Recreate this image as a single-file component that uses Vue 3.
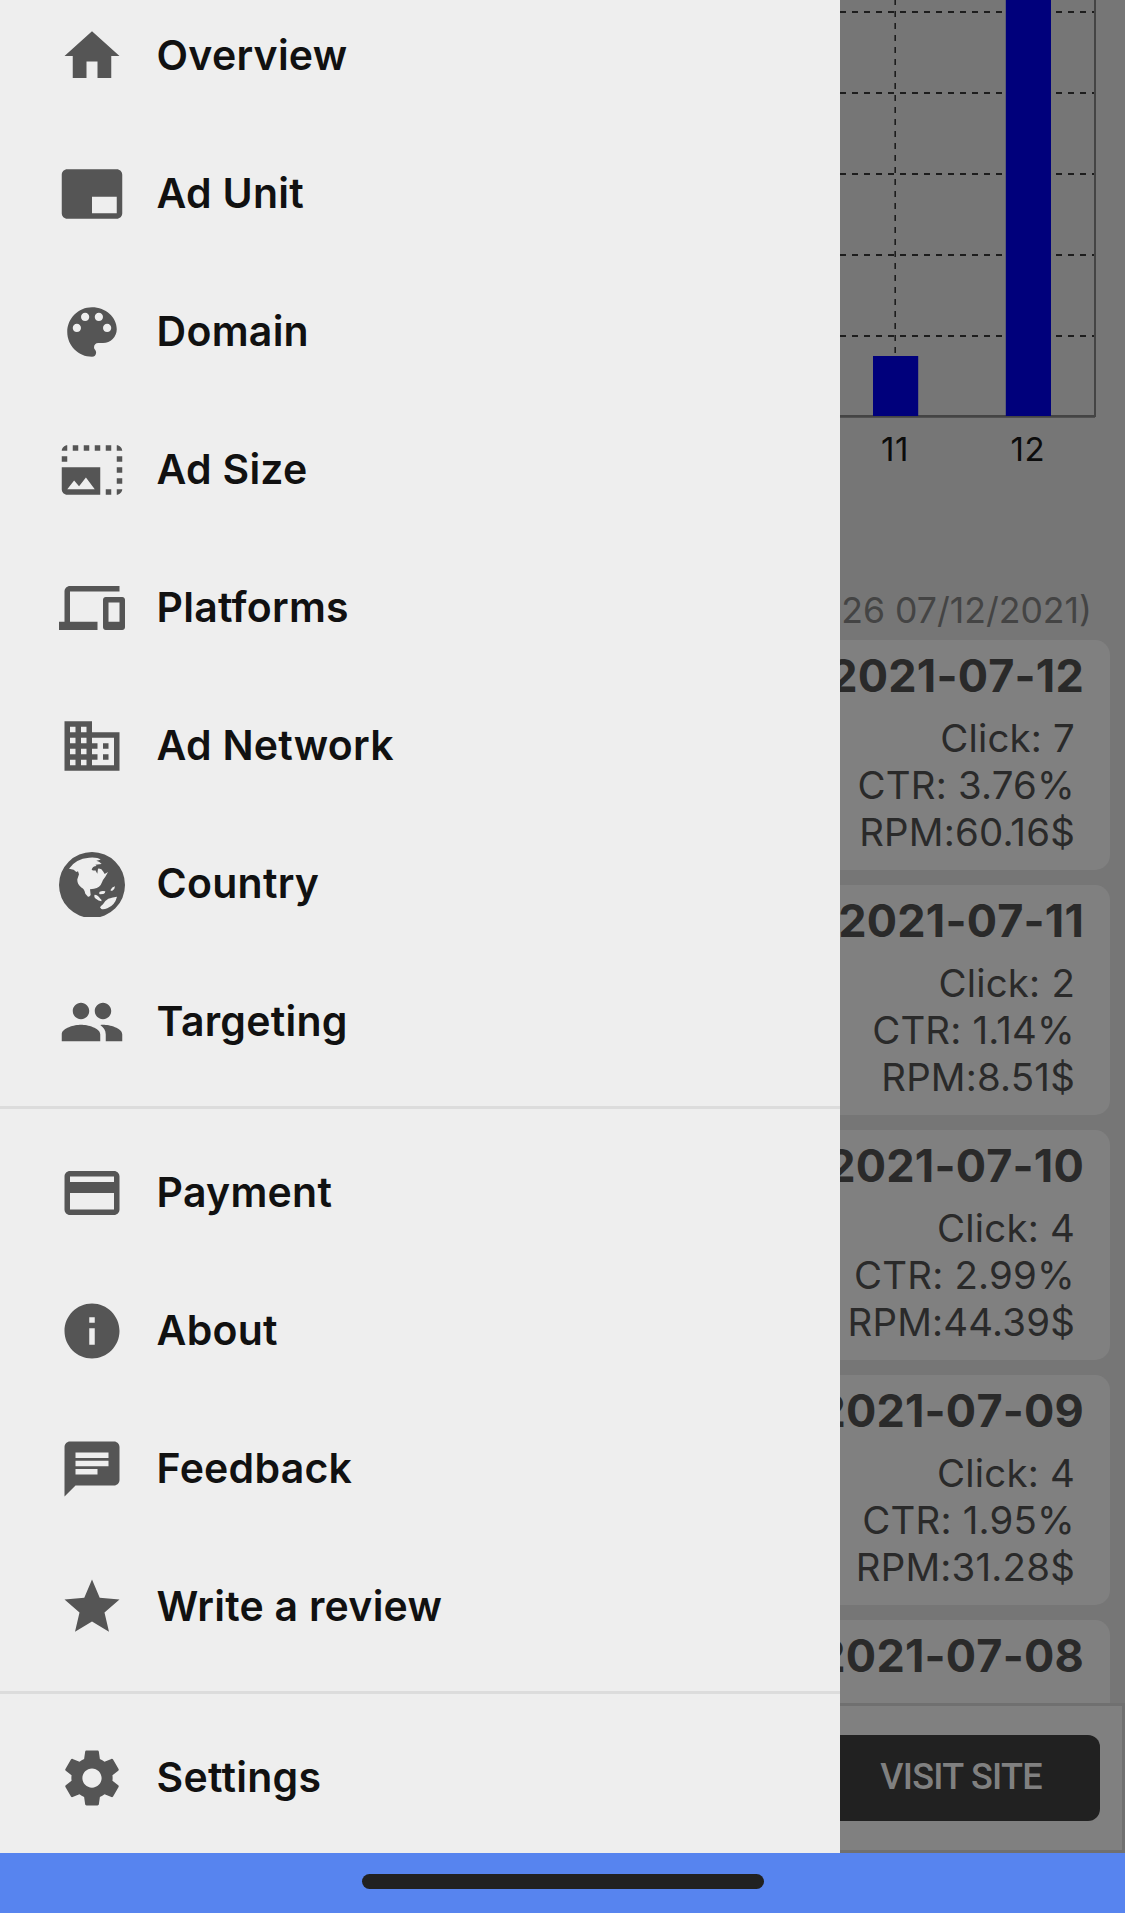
<template>
    <div class="screen">
        <main class="page">
            <svg class="chart" width="285" height="480" viewBox="840 0 285 480">
                <line
                    v-for="y in gridLines"
                    :key="y"
                    class="grid"
                    x1="840"
                    x2="1095"
                    :y1="y"
                    :y2="y"
                />
                <line class="grid thin" x1="895.2" x2="895.2" y1="-1" y2="354" />
                <line class="axis thin" x1="1095" x2="1095" y1="0" y2="417" />
                <line class="axis" x1="840" x2="1095" y1="416.3" y2="416.3" />
                <g v-for="bar in bars" :key="bar.label">
                    <rect
                        class="bar"
                        :x="bar.x"
                        :y="bar.top"
                        width="45.2"
                        :height="416 - bar.top"
                    />
                    <text class="tick" :x="bar.x + 22" y="461.3">
                        {{ bar.label }}
                    </text>
                </g>
            </svg>

            <p class="updated">26 07/12/2021)</p>

            <div class="cards">
                <section v-for="day in days" :key="day.date" class="card">
                    <h2>{{ day.date }}</h2>
                    <template v-if="day.ctr">
                        <p>Click: {{ day.click }}</p>
                        <p>CTR: {{ day.ctr }}%</p>
                        <p>RPM:{{ day.rpm }}$</p>
                    </template>
                </section>
            </div>

            <div class="ad-bar">
                <button class="visit">VISIT SITE</button>
            </div>
        </main>

        <nav class="drawer">
            <ul v-for="(group, i) in menu" :key="i" class="group">
                <li v-for="item in group" :key="item.title" class="item">
                    <svg class="icon" :viewBox="item.box || '0 0 24 24'">
                        <path :d="item.icon" fill-rule="evenodd" />
                    </svg>
                    <span>{{ item.title }}</span>
                </li>
            </ul>
        </nav>

        <footer class="home-area">
            <div class="indicator"></div>
        </footer>
    </div>
</template>

<script setup>
const gridLines = [12, 93, 174, 255, 336];

const bars = [
    { label: "11", x: 873, top: 356 },
    { label: "12", x: 1005.8, top: -10 },
];

const days = [
    { date: "2021-07-12", click: 7, ctr: "3.76", rpm: "60.16" },
    { date: "2021-07-11", click: 2, ctr: "1.14", rpm: "8.51" },
    { date: "2021-07-10", click: 4, ctr: "2.99", rpm: "44.39" },
    { date: "2021-07-09", click: 4, ctr: "1.95", rpm: "31.28" },
    { date: "2021-07-08" },
];

const menu = [
    [
        {
            title: "Overview",
            icon: "M10 20v-6h4v6h5v-8h3L12 3 2 12h3v8z",
        },
        {
            title: "Ad Unit",
            icon: "M21 3H3c-1.1 0-2 .9-2 2v14c0 1.1.9 2 2 2h18c1.1 0 2-.9 2-2V5c0-1.1-.9-2-2-2zm0 16h-9v-6h9v6z",
        },
        {
            title: "Domain",
            icon: "M12 3c-4.97 0-9 4.03-9 9s4.03 9 9 9c.83 0 1.5-.67 1.5-1.5 0-.39-.15-.74-.39-1.01-.23-.26-.38-.61-.38-.99 0-.83.67-1.5 1.5-1.5H16c2.76 0 5-2.24 5-5 0-4.42-4.03-8-9-8zm-5.5 9c-.83 0-1.5-.67-1.5-1.5S5.67 9 6.5 9 8 9.67 8 10.5 7.33 12 6.5 12zm3-4C8.67 8 8 7.33 8 6.5S8.67 5 9.5 5s1.5.67 1.5 1.5S10.33 8 9.5 8zm5 0c-.83 0-1.5-.67-1.5-1.5S13.67 5 14.5 5s1.5.67 1.5 1.5S15.33 8 14.5 8zm3 4c-.83 0-1.5-.67-1.5-1.5S16.67 9 17.5 9s1.5.67 1.5 1.5-.67 1.5-1.5 1.5z",
        },
        {
            title: "Ad Size",
            icon: "M21 15h2v2h-2v-2zm0-4h2v2h-2v-2zm2 8h-2v2c1 0 2-1 2-2zM13 3h2v2h-2V3zm8 4h2v2h-2V7zm0-4v2h2c0-1-1-2-2-2zM1 7h2v2H1V7zm16-4h2v2h-2V3zm0 16h2v2h-2v-2zM3 3C2 3 1 4 1 5h2V3zm6 0h2v2H9V3zM5 3h2v2H5V3zm-4 8v8c0 1.1.9 2 2 2h12V11H1zm2 8l2.5-3.21 1.79 2.15 2.5-3.22L13 19H3z",
        },
        {
            title: "Platforms",
            icon: "M4 6h18V4H4c-1.1 0-2 .9-2 2v11H0v3h14v-3H4V6zm19 2h-6c-.55 0-1 .45-1 1v10c0 .55.45 1 1 1h6c.55 0 1-.45 1-1V9c0-.55-.45-1-1-1zm-1 9h-4v-7h4v7z",
        },
        {
            title: "Ad Network",
            icon: "M12 7V3H2v18h20V7H12zM6 19H4v-2h2v2zm0-4H4v-2h2v2zm0-4H4V9h2v2zm0-4H4V5h2v2zm4 12H8v-2h2v2zm0-4H8v-2h2v2zm0-4H8V9h2v2zm0-4H8V5h2v2zm10 12h-8v-2h2v-2h-2v-2h2v-2h-2V9h8v10zm-2-8h-2v2h2v-2zm0 4h-2v2h2v-2z",
        },
        {
            title: "Country",
            box: "0 -3 198 198",
            icon: "M99 0a99 99 0 1 0 0 198a99 99 0 1 0 0-198zM30 50Q50 20 90 17Q116 15 125 23L112 26Q119 28 122 31L128 36L109 38L113 42Q100 43 98 53Q104 57 109 55L115 65L117 50Q127 48 133 59L137 66L147 60L139 74Q132 82 129 91Q123 108 105 110L93 112L95 129Q92 135 87 134L79 125Q76 110 68 107Q54 98 55 82L60 67L57 58L52 60L44 53zM107 128Q116 128 124 140Q129 143 127 148Q117 147 113 142Q103 137 107 128zM122 119Q130 116 139 118Q139 125 133 126L123 127Q119 125 122 119zM154 115Q159 105 168 103Q168 112 159 117zM123 166Q126 161 132 157L139 147L148 140Q162 136 174 134Q168 159 145 169Q134 173 127 171z",
        },
        {
            title: "Targeting",
            icon: "M16 11c1.66 0 2.99-1.34 2.99-3S17.66 5 16 5c-1.66 0-3 1.34-3 3s1.34 3 3 3zm-8 0c1.66 0 2.99-1.34 2.99-3S9.66 5 8 5C6.34 5 5 6.34 5 8s1.34 3 3 3zm0 2c-2.33 0-7 1.17-7 3.5V19h14v-2.5c0-2.33-4.67-3.5-7-3.5zm8 0c-.29 0-.62.02-.97.05 1.16.84 1.97 1.97 1.97 3.45V19h6v-2.5c0-2.33-4.67-3.5-7-3.5z",
        },
    ],
    [
        {
            title: "Payment",
            icon: "M20 4H4c-1.11 0-1.99.89-1.99 2L2 18c0 1.11.89 2 2 2h16c1.11 0 2-.89 2-2V6c0-1.11-.89-2-2-2zm0 14H4v-6h16v6zm0-10H4V6h16v2z",
        },
        {
            title: "About",
            icon: "M12 2C6.48 2 2 6.48 2 12s4.48 10 10 10 10-4.48 10-10S17.52 2 12 2zm1 15h-2v-6h2v6zm0-8h-2V7h2v2z",
        },
        {
            title: "Feedback",
            icon: "M20 2H4c-1.1 0-1.99.9-1.99 2L2 22l4-4h14c1.1 0 2-.9 2-2V4c0-1.1-.9-2-2-2zM6 9h12v2H6V9zm8 5H6v-2h8v2zm4-6H6V6h12v2z",
        },
        {
            title: "Write a review",
            icon: "M12 17.27L18.18 21l-1.64-7.03L22 9.24l-7.19-.61L12 2 9.19 8.63 2 9.24l5.46 4.73L5.82 21z",
        },
    ],
    [
        {
            title: "Settings",
            icon: "M19.43 12.98c.04-.32.07-.64.07-.98s-.03-.66-.07-.98l2.11-1.65c.19-.15.24-.42.12-.64l-2-3.46c-.12-.22-.39-.3-.61-.22l-2.49 1c-.52-.4-1.08-.73-1.69-.98l-.38-2.65C14.46 2.18 14.25 2 14 2h-4c-.25 0-.46.18-.49.42l-.38 2.65c-.61.25-1.17.59-1.69.98l-2.49-1c-.23-.09-.49 0-.61.22l-2 3.46c-.13.22-.07.49.12.64l2.11 1.65c-.04.32-.07.65-.07.98s.03.66.07.98l-2.11 1.65c-.19.15-.24.42-.12.64l2 3.46c.12.22.39.3.61.22l2.49-1c.52.4 1.08.73 1.69.98l.38 2.65c.03.24.24.42.49.42h4c.25 0 .46-.18.49-.42l.38-2.65c.61-.25 1.17-.59 1.69-.98l2.49 1c.23.09.49 0 .61-.22l2-3.46c.12-.22.07-.49-.12-.64l-2.11-1.65zM12 15.5c-1.93 0-3.5-1.57-3.5-3.5s1.57-3.5 3.5-3.5 3.5 1.57 3.5 3.5-1.57 3.5-3.5 3.5z",
        },
    ],
];
</script>

<style>
body {
    margin: 0;
}
</style>

<style scoped>
.screen {
    position: relative;
    display: flex;
    flex-direction: column;
    width: 1125px;
    height: 1913px;
    overflow: hidden;
    font-family: Inter, "Liberation Sans", sans-serif;
}

.page {
    display: flex;
    flex-direction: column;
    height: 1853px;
    background: #767676;
}

.chart {
    display: block;
    flex: none;
    align-self: flex-end;
}

.grid {
    stroke: #1d1d1d;
    stroke-width: 2;
    stroke-dasharray: 6 6;
}

.grid.thin {
    stroke-width: 1.6;
}

.axis {
    stroke: #444;
    stroke-width: 2.8;
}

.axis.thin {
    stroke-width: 2;
}

.bar {
    fill: #00007b;
}

.tick {
    font-size: 33px;
    font-kerning: none;
    letter-spacing: 0.6px;
    fill: #0c0c0c;
    text-anchor: middle;
}

.updated {
    box-sizing: border-box;
    flex: none;
    height: 160px;
    margin: 0;
    padding: 109px 33px 0 0;
    font-size: 35.6px;
    line-height: 44px;
    text-align: right;
    color: #444;
}

.cards {
    display: flex;
    flex: 1;
    flex-direction: column;
    gap: 15px;
    min-height: 0;
    padding: 0 15px;
    overflow: hidden;
}

.card {
    box-sizing: border-box;
    flex: none;
    height: 230px;
    padding: 8px 35px 0 0;
    border-radius: 15px;
    background: #808080;
    color: #2a2a2a;
    text-align: right;
}

.card h2 {
    margin: 0 -9px 11px 0;
    font-size: 45px;
    line-height: 56px;
    font-weight: 700;
    font-kerning: none;
    letter-spacing: 0.2px;
}

.card p {
    margin: 0;
    font-size: 38.4px;
    line-height: 47px;
    letter-spacing: 0.2px;
}

.ad-bar {
    box-sizing: border-box;
    display: flex;
    flex: none;
    align-items: center;
    justify-content: flex-end;
    height: 150px;
    padding-right: 22px;
    border: 3px solid #707070;
    background: #808080;
}

.visit {
    width: 278px;
    height: 86px;
    padding: 0 0 2px;
    border: 0;
    border-radius: 12px;
    background: #212121;
    color: #808080;
    font: 500 36px Roboto, sans-serif;
    letter-spacing: -0.7px;
}

.drawer {
    position: absolute;
    top: 0;
    left: 0;
    box-sizing: border-box;
    width: 840px;
    height: 1853px;
    overflow: hidden;
    background: #eee;
}

.group {
    margin: 0;
    padding: 15px 0;
    list-style: none;
    border-top: 3px solid #dcdcdc;
}

/* the list is scrolled slightly past its first row */
.group:first-child {
    margin-top: -31px;
}

.item {
    display: flex;
    align-items: center;
    gap: 31.6px;
    height: 138px;
    padding-left: 59px;
    color: #111;
    font-size: 41px;
    font-weight: 600;
    letter-spacing: 0.25px;
}

.item span {
    padding-bottom: 3px;
}

.icon {
    width: 66px;
    height: 66px;
    fill: #555;
}

.home-area {
    display: flex;
    justify-content: center;
    height: 60px;
    background: #5784ef;
}

.indicator {
    width: 402px;
    height: 15px;
    margin-top: 21px;
    border-radius: 8px;
    background: #212121;
}
</style>
